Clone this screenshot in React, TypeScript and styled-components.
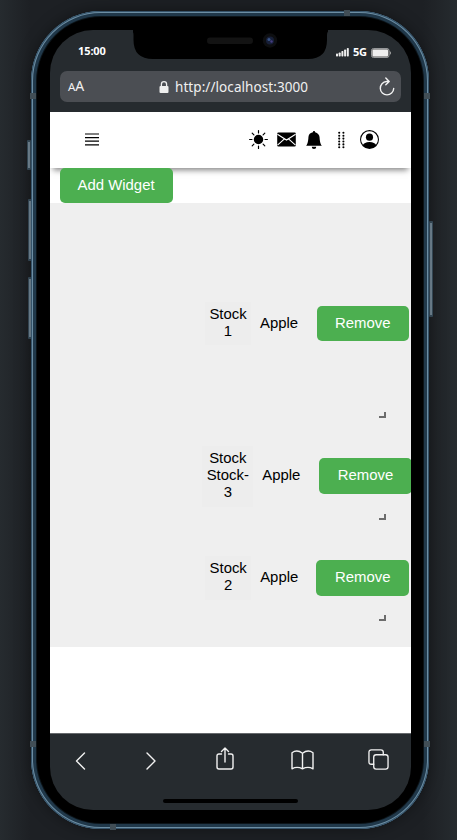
import React from 'react';
import styled, { createGlobalStyle } from 'styled-components';
import { BsSunFill, BsBellFill, BsPersonCircle } from 'react-icons/bs';

const GlobalStyle = createGlobalStyle`
  * { box-sizing: border-box; }
  body { margin: 0; background: #23282b; overflow: hidden; }
`;

const Stage = styled.div`
  width: 457px;
  height: 840px;
  padding: 11px 28px 11px 31px;
  position: relative;
  background: linear-gradient(90deg, #262b2f 0, #1d2024 30px, #1d2024 423px, #262b2f 457px);
`;

const Phone = styled.div`
  position: relative;
  width: 398px;
  height: 818px;
  padding: 19px;
  border-radius: 70px;
  background: #000;
  box-shadow: inset 0 0 0 1px #35536a, inset 0 0 0 2px #6c8da2, inset 0 0 0 5px #20384a,
    inset 0 0 0 6px #0c1419, 0 0 16px rgba(0, 0, 0, 0.4);
`;

const SideKey = styled.div<{ $x: number; $y: number; $h: number }>`
  position: absolute;
  left: ${p => p.$x}px;
  top: ${p => p.$y}px;
  width: 4px;
  height: ${p => p.$h}px;
  border: 1px solid #3b5160;
  border-width: 2px 1px;
  border-radius: 1px;
  background: #7a909f;
`;

const Antenna = styled.div<{ $x: number; $y: number }>`
  position: absolute;
  left: ${p => p.$x}px;
  top: ${p => p.$y}px;
  width: 6px;
  height: 6px;
  background: #414e56;
`;

const Screen = styled.div`
  width: 361px;
  height: 780px;
  display: flex;
  flex-direction: column;
  overflow: hidden;
  border-radius: 43px;
  background: #262b2f;
`;

const StatusBar = styled.div`
  height: 41px;
  flex: none;
  display: flex;
  color: #fff;
  font: 700 11px/42px 'Noto Sans', sans-serif;
`;

const Clock = styled.div`
  width: 83px;
  padding-left: 28px;
  letter-spacing: -0.1px;
`;

const NotchArt = styled.svg`
  width: 195px;
  height: 41px;
  flex: none;
`;

const Signals = styled.div`
  display: flex;
  align-items: center;
  padding: 4px 0 0 8px;
  line-height: 34px;
  height: 41px;
  letter-spacing: -0.2px;
`;

const Network = styled.span`
  margin: -2px 4px 0 4px;
`;

const AddressBar = styled.div`
  height: 31px;
  margin: 0 10px 10px;
  flex: none;
  display: flex;
  align-items: center;
  border-radius: 7px;
  background: #4b4e53;
  color: #f0f0f0;
  font: 14px/30px 'Noto Sans', sans-serif;
`;

const TextSize = styled.span`
  width: 99px;
  padding-left: 8px;
  small { font-size: 11.5px; }
`;

const Url = styled.span`
  width: 139px;
  margin-left: 6px;
  margin-right: 65px;
  font-size: 13.5px;
  letter-spacing: 0.07px;
  white-space: nowrap;
`;

const Page = styled.main`
  height: 621px;
  flex: none;
  background: #fff;
  overflow: hidden;
  color: #000;
  font: 14.9px/17px 'Liberation Sans', Arial, sans-serif;
`;

const Header = styled.header`
  height: 55.5px;
  display: flex;
  align-items: center;
  justify-content: space-between;
  padding: 0 32px 0 35px;
  background: #fff;
  box-shadow: 0 5px 6px -3px rgba(0, 0, 0, 0.5);
`;

const HeaderIcons = styled.div`
  display: flex;
  align-items: center;
  gap: 9px;
`;

const GreenButton = styled.button<{ $w: number; $drop?: boolean }>`
  width: ${p => p.$w}px;
  height: 35.5px;
  flex: none;
  padding: ${p => (p.$drop ? '0' : '0 0 1px')};
  border: 0;
  border-radius: 5px;
  background: #4caf50;
  color: #fff;
  font: inherit;
  position: relative;
`;

const Actions = styled.div`
  height: 35.5px;
  padding-left: 9.6px;
`;

const Board = styled.section`
  height: 444px;
  display: flex;
  flex-direction: column;
  background: #efefef;
  padding-top: 99px;
`;

const Widget = styled.article<{ $h: number }>`
  height: ${p => p.$h}px;
  flex: none;
  display: flex;
  flex-direction: column;
`;

const WidgetRow = styled.div<{ $start: number; $h: number }>`
  height: ${p => p.$h}px;
  padding-left: ${p => p.$start}px;
  display: flex;
  align-items: center;
`;

const Name = styled.div<{ $w: number }>`
  width: ${p => p.$w}px;
  height: 100%;
  flex: none;
  display: flex;
  flex-direction: column;
  align-items: center;
  padding-top: 4.4px;
  background: #ededed;
  white-space: nowrap;
`;

const Company = styled.div<{ $w: number }>`
  width: ${p => p.$w}px;
  flex: none;
  padding-left: 9px;
  margin-top: -1px;
`;

const Grip = styled.i<{ $gap: number }>`
  width: 7px;
  height: 6px;
  margin: ${p => p.$gap}px 0 0 329px;
  border: solid #6c6c6c;
  border-width: 0 2px 2px 0;
`;

const Toolbar = styled.nav`
  height: 54px;
  flex: none;
  display: grid;
  grid-template-columns: 70px 70.5px 75px 77px 22px;
  align-items: end;
  padding: 0 0 17px 25px;
  border-top: 1px solid #66696c;
`;

const HomeBar = styled.div`
  width: 135px;
  height: 4px;
  margin: 12px 0 0 113px;
  border-radius: 2px;
  background: #000;
`;

const Line = styled.svg`
  display: block;
  flex: none;
  fill: none;
  stroke: #f2f2f2;
  stroke-width: 1.4;
  stroke-linecap: round;
  stroke-linejoin: round;
`;

const Solid = styled.svg`
  display: block;
  flex: none;
`;

const widgets = [
  { name: ['Stock', '1'], height: 143.5, rowHeight: 43, start: 155, nameWidth: 46, companyWidth: 65.5, buttonWidth: 92.5, gap: 66.5 },
  { name: ['Stock', 'Stock-', '3'], height: 110.5, rowHeight: 61, start: 152.3, nameWidth: 51, companyWidth: 66, buttonWidth: 92.5, gap: 7 },
  { name: ['Stock', '2'], height: 80, rowHeight: 44, start: 155.2, nameWidth: 46, companyWidth: 65.3, buttonWidth: 92.5, gap: 15 },
];

export default function App() {
  return (
    <Stage>
      <GlobalStyle />
      <SideKey $x={27} $y={140} $h={30} />
      <SideKey $x={28} $y={199} $h={62} />
      <SideKey $x={28} $y={277} $h={62} />
      <SideKey $x={429} $y={221} $h={96} />
      <Phone>
        <Antenna $x={313} $y={-1} />
        <Antenna $x={-1} $y={82} />
        <Antenna $x={393} $y={82} />
        <Antenna $x={-1} $y={730} />
        <Antenna $x={393} $y={730} />
        <Antenna $x={79} $y={813} />
        <Screen>
          <StatusBar>
            <Clock>15:00</Clock>
            <NotchArt viewBox="0 0 195 41">
              <path d="M-4 0Q.5 0 .5 5V10Q.5 29 20 29H175Q194 29 194 10V5Q194 0 199 0Z" fill="#000" />
              <rect x="74" y="7.5" width="46" height="6.5" rx="3.2" fill="#131313" />
              <circle cx="137" cy="10.5" r="7.2" fill="#0d0e10" />
              <circle cx="137" cy="10.5" r="4" fill="#171f38" />
              <circle cx="136" cy="9.5" r="1.5" fill="#385486" />
              <circle cx="138.5" cy="11.5" r="1.2" fill="#463e83" />
            </NotchArt>
            <Signals>
              <Solid width="13" height="9" viewBox="0 0 13 9" fill="#eee">
                <rect x="0" y="5.5" width="2" height="3" rx=".7" />
                <rect x="2.7" y="4.5" width="2" height="4" rx=".7" />
                <rect x="5.4" y="3" width="2" height="5.5" rx=".7" />
                <rect x="8.1" y="1.5" width="2" height="7" rx=".7" />
                <rect x="10.8" y="0" width="2" height="8.5" rx=".7" />
              </Solid>
              <Network>5G</Network>
              <Solid width="20" height="10" viewBox="0 0 20 10">
                <rect x=".5" y=".5" width="17.5" height="9" rx="2" fill="#555" stroke="#949698" />
                <rect x="1.5" y="1.5" width="15.5" height="7" rx="1" fill="#eee" />
                <path d="M19 3.5Q20 5 19 6.5" stroke="#aaa" fill="none" />
              </Solid>
            </Signals>
          </StatusBar>
          <AddressBar>
            <TextSize><small>A</small>A</TextSize>
            <Solid width="10" height="12" viewBox="0 0 10 12">
              <rect x="0.5" y="5" width="9" height="7" rx="1" fill="#eee" />
              <path d="M2.4 5V3.3a2.6 2.6 0 0 1 5.2 0V5" fill="none" stroke="#eee" strokeWidth="1.3" />
            </Solid>
            <Url>http://localhost:3000</Url>
            <Line width="16" height="20" viewBox="0 0 16 20">
              <path d="M9 4.5H7.5a6.7 6.7 0 1 0 7.2 7M6.8 1l3.4 3.4-3.4 3.4" />
            </Line>
          </AddressBar>
          <Page>
            <Header>
              <Solid width="14" height="13" viewBox="0 0 14 13" stroke="#000" strokeWidth="1.2">
                <path d="M0 1H14M0 4.6H14M0 8.2H14M0 11.8H14" />
              </Solid>
              <HeaderIcons>
                <BsSunFill size={19} />
                <Solid width="19" height="15" viewBox="0 0 19 15">
                  <rect x=".2" y=".5" width="18.6" height="14" rx="1.2" />
                  <path d="M.4 2.2L9.5 8L18.6 2.2M.5 13.2L7.2 7.2M18.5 13.2L11.8 7.2" fill="none" stroke="#fff" strokeWidth="1.1" />
                </Solid>
                <BsBellFill size={18} />
                <Solid width="19" height="18" viewBox="0 0 19 18">
                  {[1.8, 4.7, 7.6, 10.5, 13.4, 16.3].flatMap(y =>
                    [7.2, 11.4].map(x => <circle key={`${x}-${y}`} cx={x} cy={y} r="1.05" />)
                  )}
                </Solid>
                <BsPersonCircle size={19} />
              </HeaderIcons>
            </Header>
            <Actions>
              <GreenButton $w={113} $drop>Add Widget</GreenButton>
            </Actions>
            <Board>
              {widgets.map(w => (
                <Widget key={w.name.join(' ')} $h={w.height}>
                  <WidgetRow $start={w.start} $h={w.rowHeight}>
                    <Name $w={w.nameWidth}>
                      {w.name.map(part => <span key={part}>{part}</span>)}
                    </Name>
                    <Company $w={w.companyWidth}>Apple</Company>
                    <GreenButton $w={w.buttonWidth}>Remove</GreenButton>
                  </WidgetRow>
                  <Grip $gap={w.gap} />
                </Widget>
              ))}
            </Board>
          </Page>
          <Toolbar>
            <Line width="12" height="18" viewBox="0 0 12 18"><path d="M9.5 1L1.5 9L9.5 17" /></Line>
            <Line width="12" height="18" viewBox="0 0 12 18"><path d="M2 1L10 9L2 17" /></Line>
            <Line width="18" height="23" viewBox="0 0 18 23">
              <path d="M5.5 7H3Q1 7 1 9V20Q1 22 3 22H15Q17 22 17 20V9Q17 7 15 7H12.5M9 15V1M5.5 4.5L9 1L12.5 4.5" />
            </Line>
            <Line width="23" height="20" viewBox="0 0 23 20">
              <path d="M11.5 3.2Q6 -.8 1 2.7V18.8Q6 16 11.5 18.8Q17 16 22 18.8V2.7Q17 -.8 11.5 3.2V18.5" />
            </Line>
            <Line width="21" height="21" viewBox="0 0 22 22">
              <rect x="6" y="6" width="15" height="15" rx="2.5" />
              <path d="M6 16H3.5Q1 16 1 13.5V3.5Q1 1 3.5 1H13.5Q16 1 16 3.5V6" />
            </Line>
          </Toolbar>
          <HomeBar />
        </Screen>
      </Phone>
    </Stage>
  );
}
